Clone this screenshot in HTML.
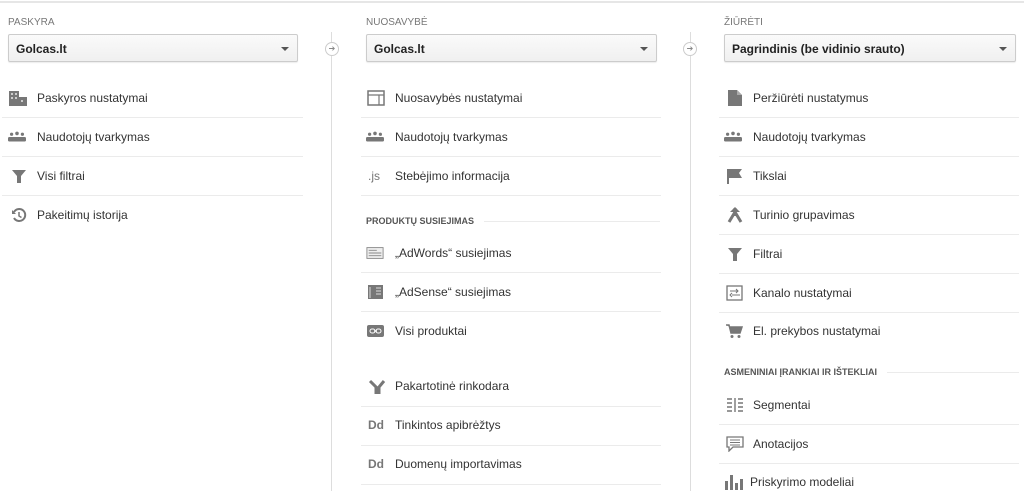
<!DOCTYPE html>
<html><head><meta charset="utf-8"><style>
*{margin:0;padding:0;box-sizing:border-box}
body{width:1024px;height:491px;background:#fff;font-family:"Liberation Sans",Arial,sans-serif;position:relative;overflow:hidden;color:#333}
.top{position:absolute;left:0;top:0;width:1024px;height:3px;border-bottom:2px solid #e6e6e6}
.lbl{position:absolute;font-size:10px;color:#777;top:17px}
.dd{position:absolute;top:34px;height:28px;border:1px solid #ccc;border-radius:2px;background:linear-gradient(#fafafa,#f0f0f0);font-size:12px;font-weight:bold;color:#222;padding:7px 7px;box-shadow:0 1px 1px rgba(0,0,0,.08)}
.dd:after{content:"";position:absolute;right:8px;top:12px;border:4px solid transparent;border-top:4px solid #555;border-bottom:0}
.vl{position:absolute;top:32px;width:1px;height:459px;background:#ddd}
.circ{position:absolute;top:42px;width:14px;height:14px;border:1px solid #ccc;border-radius:50%;background:#fff;font-size:8px;color:#888;text-align:center;line-height:12px}
.it{position:absolute;font-size:12px;color:#333;height:16px;line-height:16px}
.ic{position:absolute;width:18px;height:16px;color:#777;font-size:11px;line-height:16px}
.sep{position:absolute;height:1px;background:#ebebeb}
.h{position:absolute;font-size:9px;font-weight:bold;color:#555;line-height:12px}
</style></head><body>
<div class="top"></div>

<div class="lbl" style="left:8px">PASKYRA</div>
<div class="dd" style="left:8px;width:290px">Golcas.lt</div>
<div class="vl" style="left:331px"></div><div class="circ" style="left:325px">➔</div>

<div class="lbl" style="left:366px">NUOSAVYBĖ</div>
<div class="dd" style="left:366px;width:291px">Golcas.lt</div>
<div class="vl" style="left:690px"></div><div class="circ" style="left:683px">➔</div>

<div class="lbl" style="left:724px">ŽIŪRĖTI</div>
<div class="dd" style="left:724px;width:292px">Pagrindinis (be vidinio srauto)</div>

<!-- col1 -->
<svg class="ic" style="left:9px;top:90px" viewBox="0 0 18 16"><rect x="0" y="1" width="10" height="15" fill="#777"/><rect x="10" y="7" width="8" height="9" fill="#777"/><g fill="#ccc"><rect x="2" y="3" width="2" height="2"/><rect x="6" y="3" width="2" height="2"/><rect x="2" y="7" width="2" height="2"/><rect x="6" y="7" width="2" height="2"/><rect x="12" y="10" width="2" height="2"/></g></svg>
<div class="it" style="left:37px;top:90px">Paskyros nustatymai</div>
<div class="sep" style="left:2px;top:117px;width:301px"></div>
<svg class="ic" style="left:8px;top:129px" viewBox="0 0 20 16"><g fill="#777"><circle cx="4" cy="5" r="1.8"/><circle cx="10" cy="4" r="2"/><circle cx="16" cy="5" r="1.8"/><rect x="0" y="8" width="20" height="5" rx="1.5"/></g></svg>
<div class="it" style="left:37px;top:129px">Naudotojų tvarkymas</div>
<div class="sep" style="left:2px;top:156px;width:301px"></div>
<svg class="ic" style="left:10px;top:168px" viewBox="0 0 16 16"><path d="M1 2h14l-5 6v7h-4v-7z" fill="#777"/></svg>
<div class="it" style="left:37px;top:168px">Visi filtrai</div>
<div class="sep" style="left:2px;top:195px;width:301px"></div>
<svg class="ic" style="left:10px;top:207px" viewBox="0 0 16 16"><path d="M3 5a6 6 0 1 1 0 6" fill="none" stroke="#777" stroke-width="2"/><path d="M1 3v4h4z" fill="#777"/><path d="M8 5v4l2.5 1.5" fill="none" stroke="#777" stroke-width="1.5"/></svg>
<div class="it" style="left:37px;top:207px">Pakeitimų istorija</div>

<!-- col2 -->
<svg class="ic" style="left:367px;top:90px" viewBox="0 0 18 16"><rect x="1" y="1" width="16" height="14" fill="none" stroke="#777" stroke-width="1.5"/><path d="M1 5h16M12 5v10" stroke="#777" stroke-width="1.2"/></svg>
<div class="it" style="left:395px;top:90px">Nuosavybės nustatymai</div>
<div class="sep" style="left:361px;top:117px;width:300px"></div>
<svg class="ic" style="left:366px;top:129px" viewBox="0 0 20 16"><g fill="#777"><circle cx="4" cy="5" r="1.8"/><circle cx="10" cy="4" r="2"/><circle cx="16" cy="5" r="1.8"/><rect x="0" y="8" width="20" height="5" rx="1.5"/></g></svg>
<div class="it" style="left:395px;top:129px">Naudotojų tvarkymas</div>
<div class="sep" style="left:361px;top:156px;width:300px"></div>
<div class="ic" style="left:368px;top:168px;font-size:12px">.js</div>
<div class="it" style="left:395px;top:168px">Stebėjimo informacija</div>
<div class="sep" style="left:361px;top:195px;width:300px"></div>
<div class="h" style="left:366px;top:215px">PRODUKTŲ SUSIEJIMAS</div>
<div class="sep" style="left:484px;top:221px;width:176px"></div>
<svg class="ic" style="left:366px;top:245px" viewBox="0 0 20 16"><rect x="1" y="2" width="18" height="12" fill="#eee" stroke="#888"/><path d="M3 5h9M3 8h14M3 11h14" stroke="#888"/></svg>
<div class="it" style="left:395px;top:245px">„AdWords“ susiejimas</div>
<div class="sep" style="left:361px;top:272px;width:300px"></div>
<svg class="ic" style="left:367px;top:284px" viewBox="0 0 18 16"><rect x="1" y="1" width="15" height="14" fill="#777"/><path d="M9 4h5M9 7h5M9 10h5M3 3v11" stroke="#ddd"/></svg>
<div class="it" style="left:395px;top:284px">„AdSense“ susiejimas</div>
<div class="sep" style="left:361px;top:311px;width:300px"></div>
<svg class="ic" style="left:367px;top:323px" viewBox="0 0 18 16"><rect x="0" y="2" width="17" height="12" rx="2" fill="#777"/><path d="M7 8h3" stroke="#fff"/><rect x="3" y="6" width="5" height="4" rx="2" fill="none" stroke="#fff"/><rect x="9" y="6" width="5" height="4" rx="2" fill="none" stroke="#fff"/></svg>
<div class="it" style="left:395px;top:323px">Visi produktai</div>
<svg class="ic" style="left:368px;top:378px" viewBox="0 0 18 16"><path d="M2 3l6 6v6h3v-6l5-6" fill="none" stroke="#777" stroke-width="3"/></svg>
<div class="it" style="left:395px;top:378px">Pakartotinė rinkodara</div>
<div class="sep" style="left:361px;top:406px;width:300px"></div>
<div class="ic" style="left:368px;top:417px;font-size:12px;font-weight:bold">Dd</div>
<div class="it" style="left:395px;top:417px">Tinkintos apibrėžtys</div>
<div class="sep" style="left:361px;top:445px;width:300px"></div>
<div class="ic" style="left:368px;top:456px;font-size:12px;font-weight:bold">Dd</div>
<div class="it" style="left:395px;top:456px">Duomenų importavimas</div>
<div class="sep" style="left:361px;top:484px;width:300px"></div>

<!-- col3 -->
<svg class="ic" style="left:726px;top:90px" viewBox="0 0 18 16"><path d="M2 0h9l5 5v11h-14z" fill="#777"/><path d="M11 0v5h5" fill="#aaa"/></svg>
<div class="it" style="left:753px;top:90px">Peržiūrėti nustatymus</div>
<div class="sep" style="left:719px;top:117px;width:300px"></div>
<svg class="ic" style="left:724px;top:129px" viewBox="0 0 20 16"><g fill="#777"><circle cx="4" cy="5" r="1.8"/><circle cx="10" cy="4" r="2"/><circle cx="16" cy="5" r="1.8"/><rect x="0" y="8" width="20" height="5" rx="1.5"/></g></svg>
<div class="it" style="left:753px;top:129px">Naudotojų tvarkymas</div>
<div class="sep" style="left:719px;top:156px;width:300px"></div>
<svg class="ic" style="left:726px;top:168px" viewBox="0 0 18 16"><path d="M1 1h15l-3 4 3 5h-13v6h-2z" fill="#777"/></svg>
<div class="it" style="left:753px;top:168px">Tikslai</div>
<div class="sep" style="left:719px;top:195px;width:300px"></div>
<svg class="ic" style="left:726px;top:207px" viewBox="0 0 18 16"><path d="M3 15l6-10 6 10M9 1v8" fill="none" stroke="#777" stroke-width="3"/><path d="M4 5l5-5 5 5z" fill="#777"/></svg>
<div class="it" style="left:753px;top:207px">Turinio grupavimas</div>
<div class="sep" style="left:719px;top:234px;width:300px"></div>
<svg class="ic" style="left:726px;top:246px" viewBox="0 0 16 16"><path d="M1 2h14l-5 6v7h-4v-7z" fill="#777"/></svg>
<div class="it" style="left:753px;top:246px">Filtrai</div>
<div class="sep" style="left:719px;top:273px;width:300px"></div>
<svg class="ic" style="left:726px;top:285px" viewBox="0 0 18 16"><rect x="1" y="1" width="15" height="14" fill="none" stroke="#777" stroke-width="1.3"/><path d="M4 6h8M10 4l2 2-2 2M6 10h8M6 8l-2 2 2 2" fill="none" stroke="#777"/></svg>
<div class="it" style="left:753px;top:285px">Kanalo nustatymai</div>
<div class="sep" style="left:719px;top:312px;width:300px"></div>
<svg class="ic" style="left:726px;top:323px" viewBox="0 0 18 16"><path d="M0 2h3l2 8h9l2-6h-12" fill="#777" stroke="#777" stroke-width="1.5"/><circle cx="6" cy="13.5" r="1.5" fill="#777"/><circle cx="13" cy="13.5" r="1.5" fill="#777"/></svg>
<div class="it" style="left:753px;top:323px">El. prekybos nustatymai</div>
<div class="h" style="left:724px;top:366px">ASMENINIAI ĮRANKIAI IR IŠTEKLIAI</div>
<div class="sep" style="left:887px;top:372px;width:132px"></div>
<svg class="ic" style="left:726px;top:397px" viewBox="0 0 18 16"><path d="M1 2h5M1 6h5M1 10h5M1 14h5M9 1v14M12 2h5M12 6h5M12 10h5M12 14h5" stroke="#777" stroke-width="1.4"/></svg>
<div class="it" style="left:753px;top:397px">Segmentai</div>
<div class="sep" style="left:719px;top:424px;width:300px"></div>
<svg class="ic" style="left:726px;top:436px" viewBox="0 0 18 16"><path d="M1 1h16v10h-10l-4 4v-4h-2z" fill="none" stroke="#777" stroke-width="1.3"/><path d="M4 4h10M4 6.5h10M4 9h10" stroke="#777"/></svg>
<div class="it" style="left:753px;top:436px">Anotacijos</div>
<div class="sep" style="left:719px;top:463px;width:300px"></div>
<svg class="ic" style="left:725px;top:474px" viewBox="0 0 18 16"><g fill="#777"><rect x="0" y="7" width="3" height="9"/><rect x="5" y="1" width="3" height="15"/><rect x="10" y="9" width="3" height="7"/><rect x="15" y="5" width="3" height="11"/></g></svg>
<div class="it" style="left:750px;top:474px">Priskyrimo modeliai</div>
</body></html>
